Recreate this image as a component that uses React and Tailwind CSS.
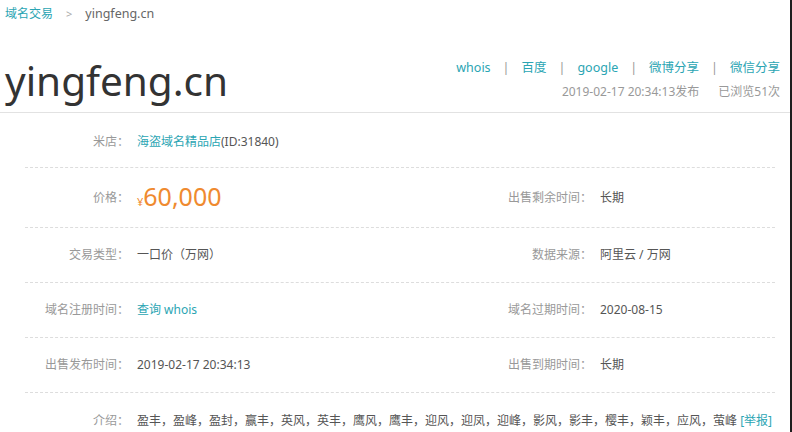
const links = ['whois', '百度', 'google', '微博分享', '微信分享']

const intro = '盈丰，盈峰，盈封，赢丰，英风，英丰，鹰风，鹰丰，迎风，迎凤，迎峰，影风，影丰，樱丰，颖丰，应风，萤峰'

const Label = ({ children }) => (
  <div className="w-[104px] shrink-0 text-right text-[12px] text-[#999]">{children}</div>
)

const Cell = ({ label, children }) => (
  <div className="flex items-center">
    <Label>{label}</Label>
    <div className="ml-[8px] text-[12px] text-[#555]">{children}</div>
  </div>
)

const Row = ({ className = 'h-[55px]', children }) => (
  <div className={`grid grid-cols-[463px_1fr] items-center border-b border-dashed border-[#ddd] ${className}`}>
    {children}
  </div>
)

export default function App() {
  return (
    <div className="w-[792px] h-[432px] overflow-hidden bg-white border-r-2 border-[#1e1e1e] font-['Noto_Sans','Noto_Sans_CJK_SC',sans-serif]">
      {/* breadcrumb */}
      <div className="h-[28px] flex items-center pl-[5px] text-[12px]">
        <span className="text-[#2ba5b3]">域名交易</span>
        <span className="mx-[13px] text-[#aaa] text-[11px]">&gt;</span>
        <span className="text-[#666] text-[12.5px]">yingfeng.cn</span>
      </div>

      {/* header */}
      <div className="h-[85px] flex justify-between items-start border-b border-[#e2e2e2] pl-[5px] pr-[10px]">
        <h1 className="mt-[33px] text-[40.5px] leading-none text-[#333]">yingfeng.cn</h1>
        <div className="mt-[30px] flex flex-col items-end">
          <div className="h-[20px] flex items-center text-[12.5px] text-[#2ba5b3]">
            {links.map((l, i) => (
              <span key={l} className="flex items-center">
                {i > 0 && <span className="mx-[12px] text-[#999]">|</span>}
                {l}
              </span>
            ))}
          </div>
          <div className="mt-[4px] h-[20px] flex items-center text-[12px] text-[#999]">
            <span>2019-02-17 20:34:13发布</span>
            <span className="ml-[19px]">已浏览51次</span>
          </div>
        </div>
      </div>

      {/* detail rows */}
      <div className="ml-[25px] mr-[15px]">
        <Row className="h-[55px] pt-[3px]">
          <Cell label="米店：">
            <span className="text-[#2ba5b3]">海盗域名精品店</span>(ID:31840)
          </Cell>
        </Row>
        <Row className="h-[60px]">
          <Cell label="价格：">
            <span className="text-[#ef8a2f]">
              <span className="text-[11px]">¥</span>
              <span className="text-[25px] leading-none">60,000</span>
            </span>
          </Cell>
          <Cell label="出售剩余时间：">长期</Cell>
        </Row>
        <Row>
          <Cell label="交易类型：">一口价（万网）</Cell>
          <Cell label="数据来源：">阿里云 / 万网</Cell>
        </Row>
        <Row>
          <Cell label="域名注册时间：">
            <span className="text-[#2ba5b3]">查询 whois</span>
          </Cell>
          <Cell label="域名过期时间：">2020-08-15</Cell>
        </Row>
        <Row>
          <Cell label="出售发布时间：">2019-02-17 20:34:13</Cell>
          <Cell label="出售到期时间：">长期</Cell>
        </Row>
        <div className="h-[55px] flex items-center">
          <Label>介绍：</Label>
          <div className="ml-[8px] text-[12px] text-[#555] whitespace-nowrap">
            {intro} <span className="text-[#2ba5b3]">[举报]</span>
          </div>
        </div>
      </div>
    </div>
  )
}
